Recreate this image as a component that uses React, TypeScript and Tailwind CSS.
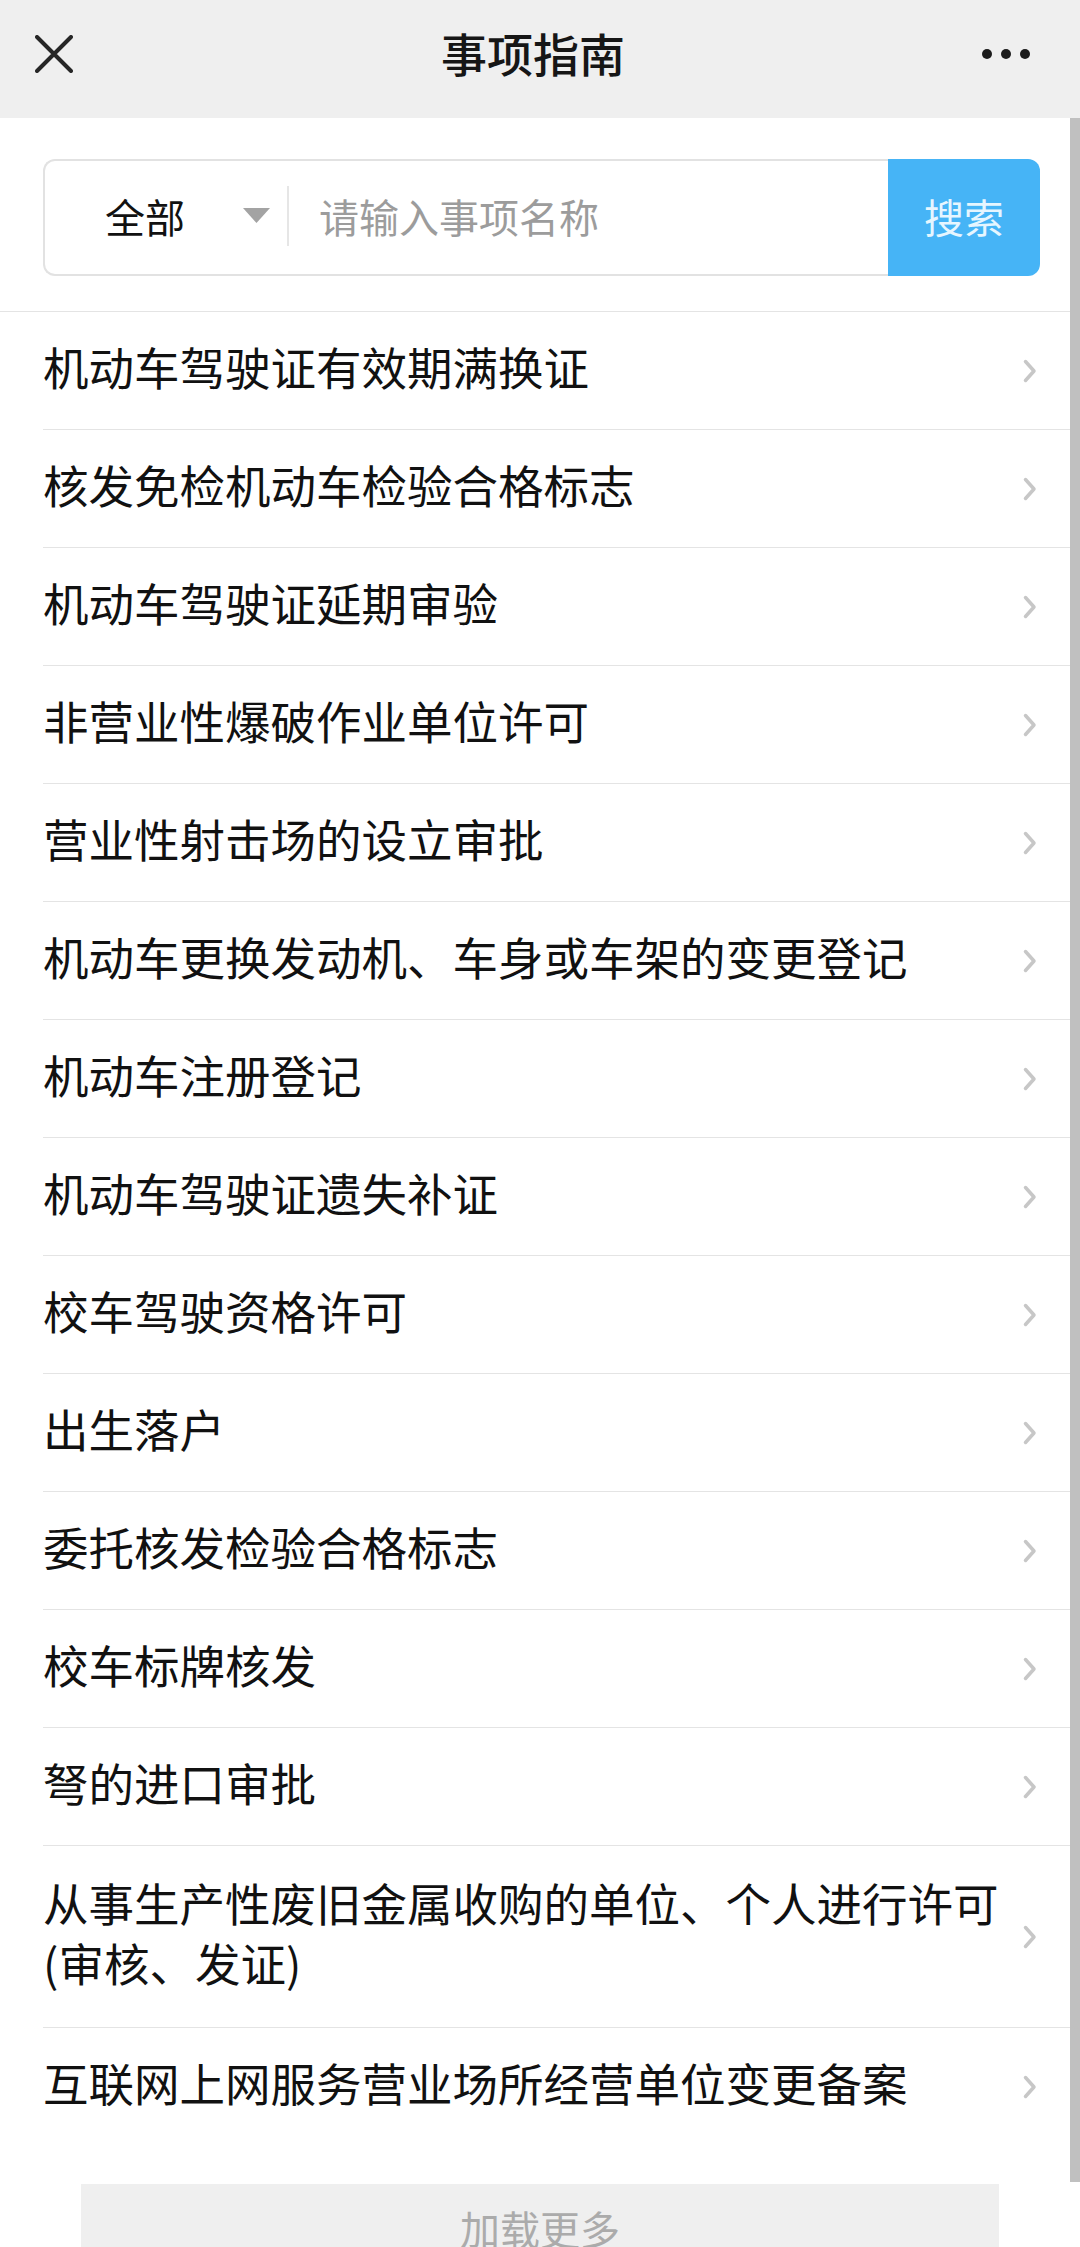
import React from "react";

const items: string[][] = [
  ["机动车驾驶证有效期满换证"],
  ["核发免检机动车检验合格标志"],
  ["机动车驾驶证延期审验"],
  ["非营业性爆破作业单位许可"],
  ["营业性射击场的设立审批"],
  ["机动车更换发动机、车身或车架的变更登记"],
  ["机动车注册登记"],
  ["机动车驾驶证遗失补证"],
  ["校车驾驶资格许可"],
  ["出生落户"],
  ["委托核发检验合格标志"],
  ["校车标牌核发"],
  ["弩的进口审批"],
  ["从事生产性废旧金属收购的单位、个人进行许可", "(审核、发证)"],
  ["互联网上网服务营业场所经营单位变更备案"],
];

function Chevron() {
  return (
    <svg width="14" height="24" viewBox="0 0 14 24" className="shrink-0">
      <path d="M2.5 2.5 L11 12 L2.5 21.5" fill="none" stroke="#c7c7c7" strokeWidth="3.5" strokeLinecap="round" strokeLinejoin="round" />
    </svg>
  );
}

export default function App() {
  const font = { fontFamily: '"Noto Sans CJK SC", "Noto Sans", sans-serif' };
  return (
    <div className="relative w-[1080px] h-[2247px] overflow-hidden bg-white" style={font}>
      {/* Header */}
      <div className="flex h-[118px] items-center bg-[#efefef] pb-[10px]">
        <div className="flex w-[110px] items-center pl-[35px]">
          <svg width="38" height="38" viewBox="0 0 38 38">
            <path d="M2 2 L36 36 M36 2 L2 36" stroke="#262626" strokeWidth="4" strokeLinecap="round" />
          </svg>
        </div>
        <div className="flex-1 pb-[4px] text-center text-[46px] font-medium leading-none text-[#161616]">事项指南</div>
        <div className="flex w-[124px] items-center gap-[9px] pl-[26px]">
          <span className="block h-[10px] w-[10px] rounded-full bg-[#1c1c1c]" />
          <span className="block h-[10px] w-[10px] rounded-full bg-[#1c1c1c]" />
          <span className="block h-[10px] w-[10px] rounded-full bg-[#1c1c1c]" />
        </div>
      </div>

      {/* Search */}
      <div className="border-b border-[#e4e4e4] pb-[35px] pl-[43px] pr-[40px] pt-[41px]">
        <div className="flex h-[117px]">
          <div className="flex flex-1 items-center rounded-l-[12px] border-2 border-r-0 border-[#e2e2e2] pb-[4px]">
            <span className="ml-[60px] text-[40px] leading-none text-[#111]">全部</span>
            <svg width="27" height="15" viewBox="0 0 27 15" className="ml-[58px]">
              <path d="M0 0 L27 0 L13.5 15 Z" fill="#a3a3a3" />
            </svg>
            <div className="ml-[17px] h-[60px] w-[2px] bg-[#e6e6e6]" />
            <span className="ml-[30px] text-[40px] leading-none text-[#9c9c9c]">请输入事项名称</span>
          </div>
          <div className="flex w-[152px] items-center justify-center rounded-r-[12px] bg-[#46b4f6] pb-[4px] text-[40px] leading-none text-[#e6f6ff]">
            搜索
          </div>
        </div>
      </div>

      {/* List */}
      <div className="ml-[43px]">
        {items.map((lines, i) => {
          const multi = lines.length > 1;
          const last = i === items.length - 1;
          return (
            <div
              key={i}
              className={
                "flex items-center justify-between pr-[43px] " +
                (multi ? "h-[182px] " : "h-[118px] ") +
                (last ? "" : "border-b border-[#e4e4e4]")
              }
            >
              <div className="whitespace-nowrap pb-[10px] text-[45.5px] leading-[60px] text-[#111]">
                {lines.map((l, j) => (
                  <div key={j}>{l}</div>
                ))}
              </div>
              <Chevron />
            </div>
          );
        })}
      </div>

      {/* Load more */}
      <div className="mx-[81px] mt-[38px] flex h-[120px] justify-center bg-[#efefef] pt-[24px]">
        <span className="text-[40px] leading-none text-[#ababab]">加载更多</span>
      </div>

      {/* Scroll indicator */}
      <div className="absolute right-0 top-[118px] h-[2064px] w-[10px] bg-[#c0c0c0]" />
    </div>
  );
}
